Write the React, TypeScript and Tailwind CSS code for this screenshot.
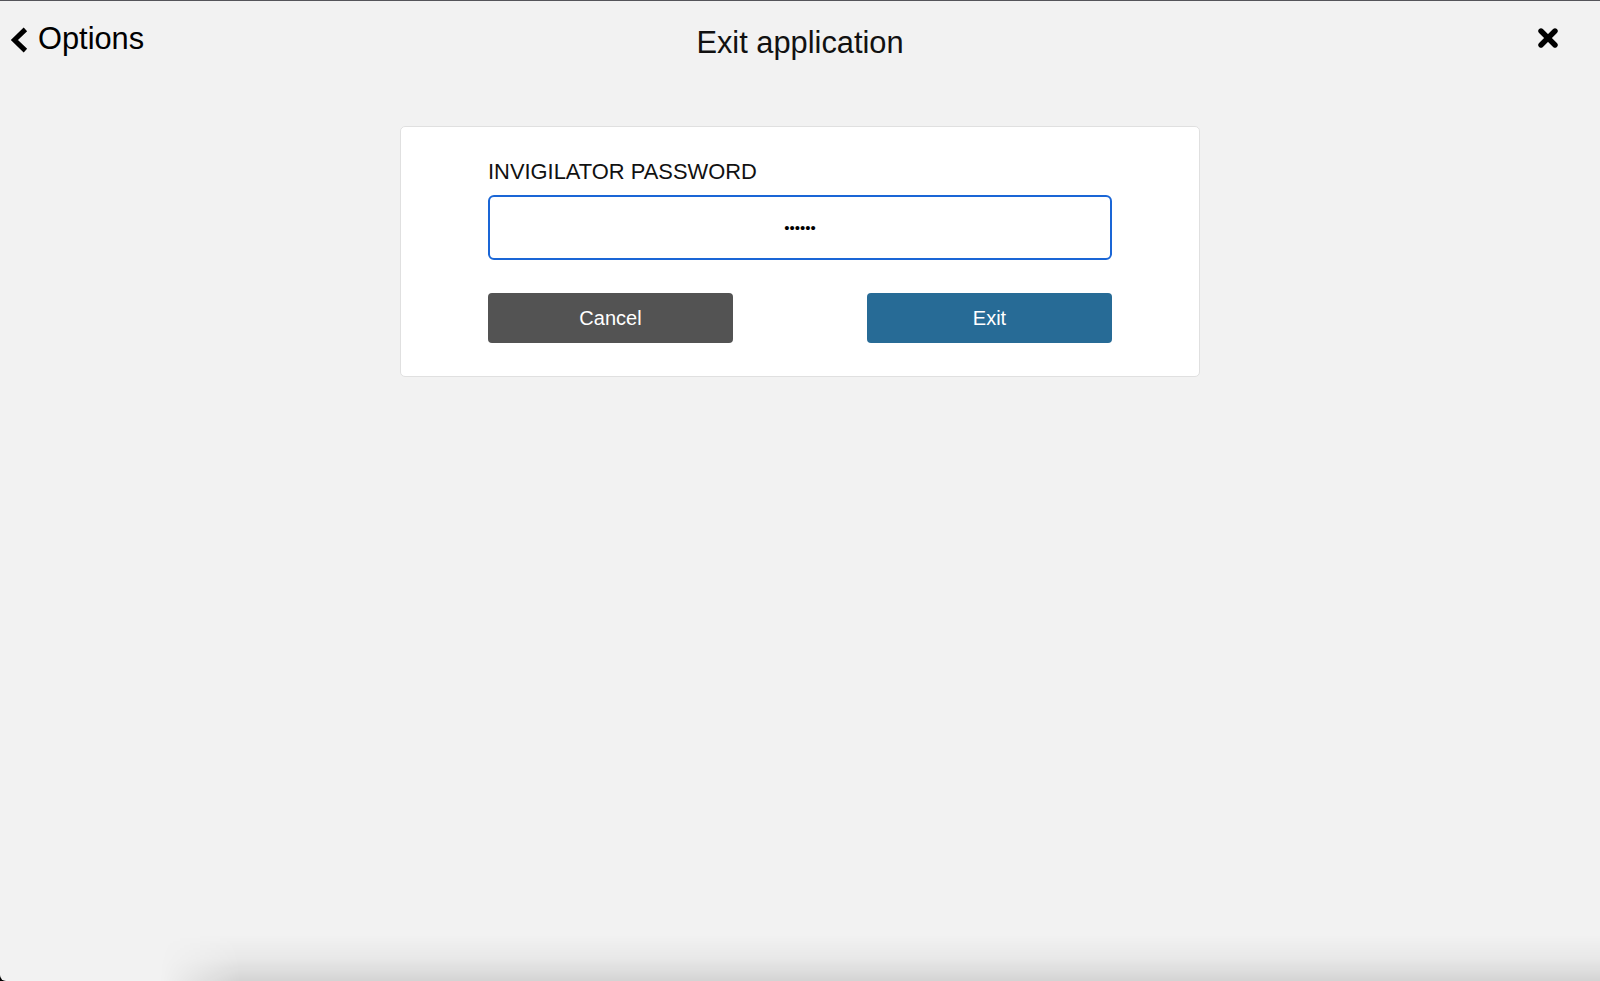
import React from "react";

function Chevron() {
  return (
    <svg width="19" height="26" viewBox="0 0 19 26" className="mt-[3px] shrink-0">
      <polyline
        points="16.4,2.4 5.4,13 16.4,23.6"
        fill="none"
        stroke="#000"
        strokeWidth="5"
        strokeLinejoin="miter"
        strokeLinecap="butt"
      />
    </svg>
  );
}

function CloseIcon() {
  return (
    <svg width="20" height="20" viewBox="0 0 20 20" className="shrink-0">
      <g stroke="#000" strokeWidth="5.4" strokeLinecap="round">
        <line x1="3" y1="3" x2="17" y2="17" />
        <line x1="17" y1="3" x2="3" y2="17" />
      </g>
    </svg>
  );
}

export default function App() {
  return (
    <div className="w-full h-[981px] bg-black">
      <div
        className="relative w-full h-full flex flex-col bg-[#f2f2f2] border-t border-[#55555a] rounded-bl-[6px] overflow-hidden text-black"
        style={{ fontFamily: '"Liberation Sans", Arial, Helvetica, sans-serif' }}
      >
        {/* Header */}
        <div className="h-[57px] grid grid-cols-[1fr_auto_1fr] items-start">
          <button className="flex items-start gap-[10px] pl-[9px] pt-[23px] justify-self-start">
            <Chevron />
            <span className="text-[30.8px] leading-[30px]">Options</span>
          </button>
          <h1 className="pt-[27px] text-[30.8px] leading-[30px] font-normal text-[#111]">
            Exit application
          </h1>
          <button className="justify-self-end pt-[27px] pr-[42px]">
            <CloseIcon />
          </button>
        </div>

        {/* Card */}
        <div className="mt-[68px] mx-auto w-[800px] bg-white border border-[#e0e0e0] rounded-[5px] px-[87px] pt-[32px] pb-[33px]">
          <label className="block text-[21.9px] leading-[26px] text-[#111]">
            INVIGILATOR PASSWORD
          </label>
          <input
            type="password"
            readOnly
            value="123456"
            className="mt-[10px] block w-full h-[65px] border-2 border-[#1a66d6] rounded-[6px] bg-white text-center text-[15px] text-black outline-none"
          />
          <div className="mt-[33px] flex justify-between">
            <button className="w-[245px] h-[50px] rounded-[4px] bg-[#535353] text-white text-[20px]">
              Cancel
            </button>
            <button className="w-[245px] h-[50px] rounded-[4px] bg-[#276b96] text-white text-[20px]">
              Exit
            </button>
          </div>
        </div>

        <div className="flex-1" />

        {/* bottom shadow of the dock/window */}
        <div className="h-[46px] bg-[linear-gradient(to_bottom,rgba(0,0,0,0),rgba(0,0,0,0.04)_50%,rgba(0,0,0,0.12))] [mask-image:linear-gradient(to_right,transparent_160px,black_240px)]" />
      </div>
    </div>
  );
}
